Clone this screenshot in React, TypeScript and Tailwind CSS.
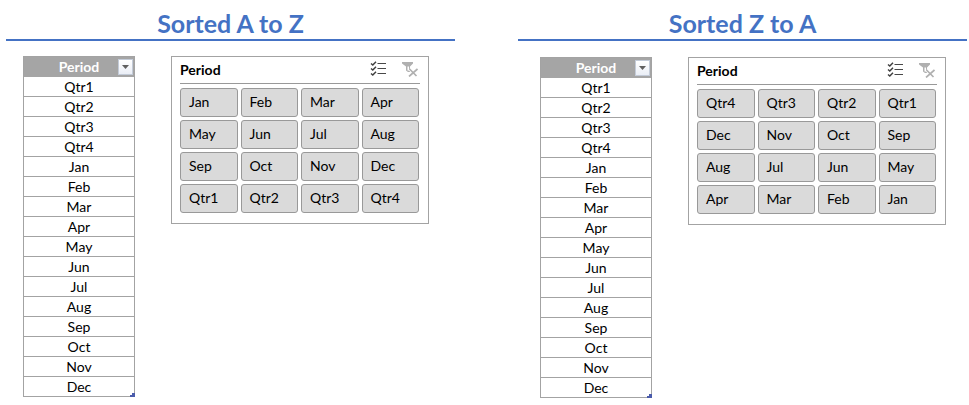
import React from 'react';

interface SortPanelProps {
  id: string;
  title: string;
  slicerItems: string[];
  bodyClass: string;
}

const tableRows = [
  'Qtr1', 'Qtr2', 'Qtr3', 'Qtr4',
  'Jan', 'Feb', 'Mar', 'Apr', 'May', 'Jun',
  'Jul', 'Aug', 'Sep', 'Oct', 'Nov', 'Dec',
];

const ascending = [
  'Jan', 'Feb', 'Mar', 'Apr',
  'May', 'Jun', 'Jul', 'Aug',
  'Sep', 'Oct', 'Nov', 'Dec',
  'Qtr1', 'Qtr2', 'Qtr3', 'Qtr4',
];

const descending = [
  'Qtr4', 'Qtr3', 'Qtr2', 'Qtr1',
  'Dec', 'Nov', 'Oct', 'Sep',
  'Aug', 'Jul', 'Jun', 'May',
  'Apr', 'Mar', 'Feb', 'Jan',
];

const MultiSelectIcon: React.FC = () => (
  <svg width="17" height="16" viewBox="0 0 17 16" fill="none" aria-hidden="true">
    <path d="M7.5 2.5H16M7.5 7.5H16M7.5 12.5H16" stroke="#484848" />
    <path
      d="M1 2.5L2.8 4L6 0.8M1 7.5L2.8 9L6 5.8M1 12.5L2.8 14L6 10.8"
      stroke="#404040"
      strokeWidth="1.5"
    />
  </svg>
);

const ClearFilterIcon: React.FC = () => (
  <svg width="16" height="16" viewBox="0 0 16 16" fill="none" aria-hidden="true">
    <path d="M0 1H11V2.5L8 5.5V11H6L4 9.5V5.5L0 2.5Z" fill="#b0b0b0" />
    <path d="M5.5 5.5H7V9.5H5.5Z" fill="#fff" />
    <path d="M7.5 8L14.5 15M15 8L7.5 15" stroke="#fff" strokeWidth="3" />
    <path d="M7.5 8L14.5 15M15.5 8L7 15.5" stroke="#b0b0b0" strokeWidth="1.7" />
  </svg>
);

const PeriodTable: React.FC = () => (
  <table className="w-28 shrink-0 table-fixed border-separate border-spacing-0 border-x border-t border-[#a3a3a3] text-center text-sm leading-[19px]">
    <thead>
      <tr>
        <th className="relative h-5 bg-[#a5a5a5] p-0 font-bold leading-5 text-white">
          Period
          <button
            type="button"
            aria-label="Filter Period"
            className="absolute right-px top-0.5 flex h-4 w-[15px] items-center justify-center border border-[#c3cbd8] bg-gradient-to-b from-white to-[#eaeef6]"
          >
            <svg width="7" height="4" viewBox="0 0 7 4" aria-hidden="true">
              <path d="M0 0H7L3.5 4Z" fill="#606060" />
            </svg>
          </button>
        </th>
      </tr>
    </thead>
    <tbody>
      {tableRows.map((row, i) => (
        <tr key={row}>
          <td className="relative h-5 border-b border-[#a3a3a3] p-0">
            {row}
            {/* Resize handle in the last cell */}
            {i === tableRows.length - 1 && (
              <svg
                className="absolute -bottom-px -right-px"
                width="5"
                height="4"
                viewBox="0 0 5 4"
                shapeRendering="crispEdges"
                aria-hidden="true"
              >
                <path d="M2 0H5V4H0V2H2Z" fill="#4a5bab" />
              </svg>
            )}
          </td>
        </tr>
      ))}
    </tbody>
  </table>
);

const Slicer: React.FC<{ items: string[] }> = ({ items }) => (
  <div className="w-[258px] border border-[#a3a3a3] px-2 pb-2.5 text-sm">
    <div className="flex h-[27px] items-center justify-between border-b border-[#999]">
      <h3 className="font-bold">Period</h3>
      <div className="flex items-center gap-[15px] pb-0.5 pr-0.5">
        <button type="button" aria-label="Multi-select">
          <MultiSelectIcon />
        </button>
        <button type="button" aria-label="Clear filter">
          <ClearFilterIcon />
        </button>
      </div>
    </div>
    <div className="grid grid-cols-4 gap-[3px] pr-px pt-1">
      {items.map((item) => (
        <button
          key={item}
          type="button"
          className="h-[29px] rounded-[3px] border border-[#999] bg-[#dadada] px-2 pb-px text-left"
        >
          {item}
        </button>
      ))}
    </div>
  </div>
);

const SortPanel: React.FC<SortPanelProps> = ({ id, title, slicerItems, bodyClass }) => (
  <section aria-labelledby={id} className="flex-1">
    <h2
      id={id}
      className="border-b-2 border-[#4472c4] pb-px pt-2 text-center text-[25px] leading-[30px] font-bold text-[#4472c4]"
    >
      {title}
    </h2>
    <div className={`flex items-start gap-9 ${bodyClass}`}>
      <PeriodTable />
      <Slicer items={slicerItems} />
    </div>
  </section>
);

export default function App() {
  return (
    <main className="flex gap-[63px] bg-white pl-1.5 pr-0.5 font-[Lato,'Liberation_Sans',sans-serif] text-black">
      <SortPanel id="sorted-asc" title="Sorted A to Z" slicerItems={ascending} bodyClass="pl-[17px] pt-[15px]" />
      <SortPanel id="sorted-desc" title="Sorted Z to A" slicerItems={descending} bodyClass="pl-[22px] pt-4" />
    </main>
  );
}
